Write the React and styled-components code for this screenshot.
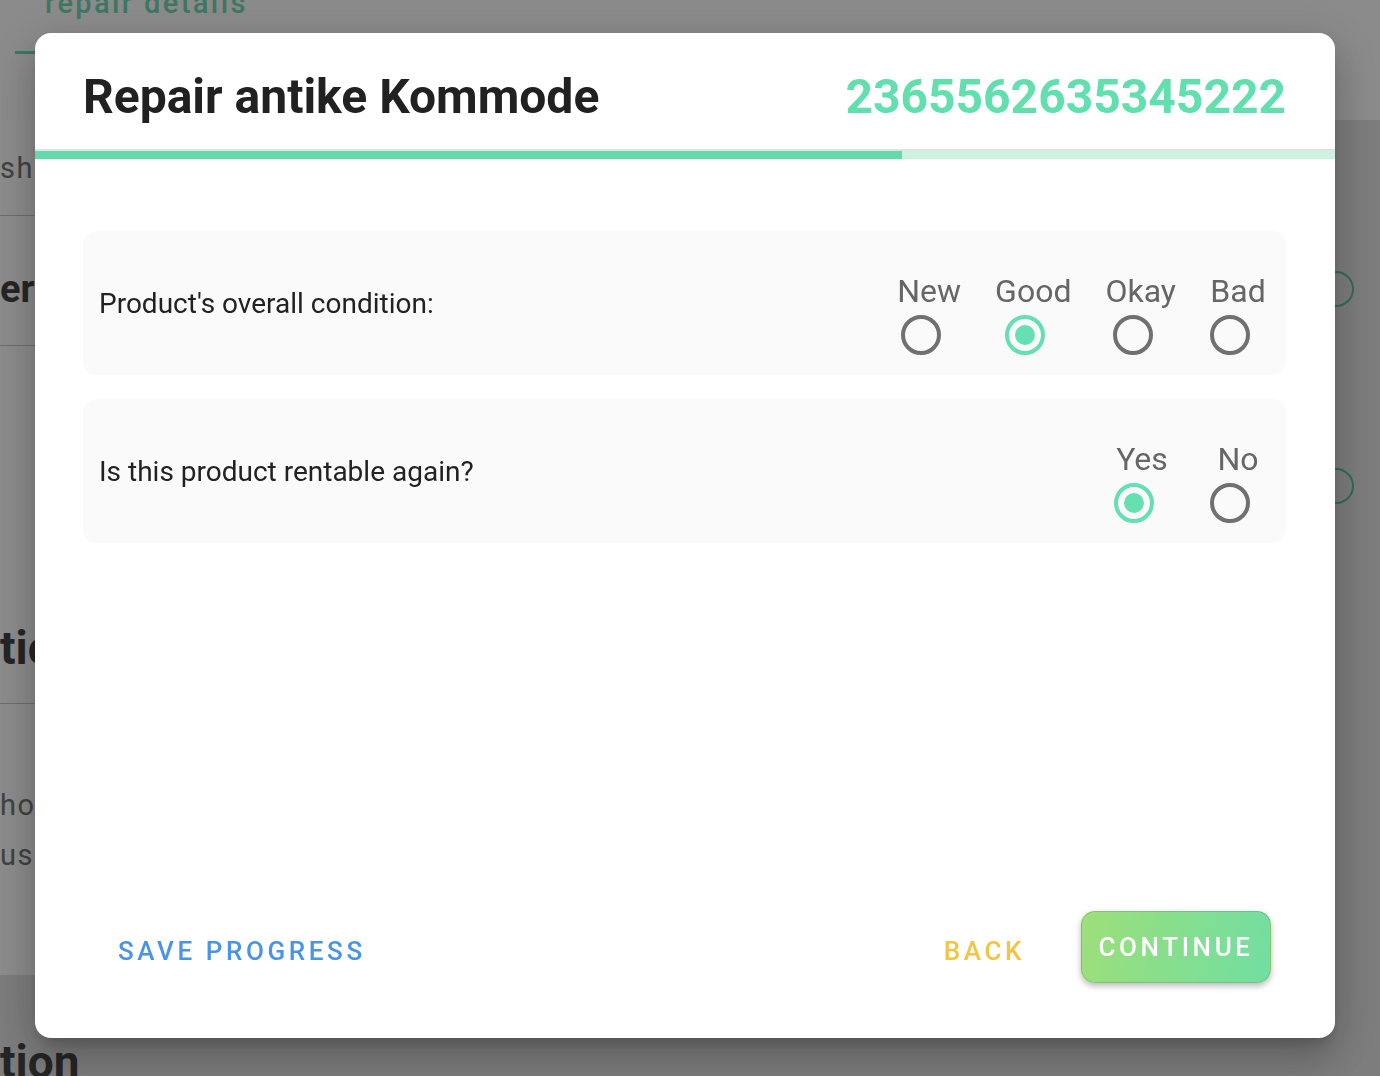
import React, { useState } from 'react'
import styled, { createGlobalStyle } from 'styled-components'

const GlobalStyle = createGlobalStyle`
  html, body { margin: 0; padding: 0; }
  body {
    font-family: Roboto, "Liberation Sans", Arial, sans-serif;
    background: #e4e4e4;
    overflow: hidden;
  }
`

/* ---------- page behind the dialog ---------- */
const Page = styled.div`
  width: 1380px;
  height: 1076px;
  display: flex;
  flex-direction: column;
  overflow: hidden;
`
const TopBar = styled.div`
  height: 120px;
  flex-shrink: 0;
  background: #fdfdfd;
  display: flex;
  flex-direction: column;
  padding-left: 15px;
  box-sizing: border-box;
`
const Tab = styled.div`
  color: #70dab2;
  font-size: 29px;
  font-weight: 500;
  letter-spacing: 2.4px;
  padding-left: 30px;
  margin-top: -14px;
  height: 68px;
  border-bottom: 3px solid #70dab2;
  width: 260px;
  box-sizing: border-box;
`
const Content = styled.div`
  height: 855px;
  flex-shrink: 0;
  width: 1330px;
  background: #ffffff;
  display: flex;
  flex-direction: column;
`
const Section = styled.div`
  height: ${({ h }) => h}px;
  flex-shrink: 0;
  border-bottom: ${({ line }) => (line ? '1px solid #c9c9c9' : 'none')};
  display: flex;
  flex-direction: column;
  justify-content: ${({ top }) => (top ? 'flex-start' : 'center')};
  padding-top: ${({ top }) => top || 0}px;
  box-sizing: border-box;
`
const Row = styled.div`
  display: flex;
  align-items: center;
  justify-content: space-between;
  height: ${({ h }) => h || 40}px;
`
const PageText = styled.div`
  color: ${({ bold }) => (bold ? '#444' : '#777')};
  font-size: ${({ size }) => size}px;
  font-weight: ${({ bold }) => (bold ? 700 : 400)};
  letter-spacing: ${({ bold }) => (bold ? 0 : 1.5)}px;
  line-height: ${({ lh }) => lh || 50}px;
  margin-top: ${({ mt }) => mt || 0}px;
`
const Pill = styled.div`
  width: 110px;
  height: 36px;
  border: 2px solid #5cc79c;
  border-radius: 18px;
  margin-right: -24px;
  box-sizing: border-box;
`
const Bottom = styled.div`
  flex: 1;
  padding-top: 62px;
`

/* ---------- dialog ---------- */
const Overlay = styled.div`
  position: fixed;
  inset: 0;
  background: rgba(0, 0, 0, 0.45);
  display: flex;
  align-items: flex-start;
  justify-content: flex-start;
`
const Dialog = styled.div`
  margin: 33px 0 0 35px;
  width: 1300px;
  height: 1005px;
  background: #fff;
  border-radius: 16px;
  overflow: hidden;
  display: flex;
  flex-direction: column;
  box-shadow: 0 11px 15px -7px rgba(0,0,0,.2), 0 24px 38px 3px rgba(0,0,0,.14), 0 9px 46px 8px rgba(0,0,0,.12);
`
const Header = styled.div`
  height: 118px;
  flex-shrink: 0;
  display: flex;
  align-items: center;
  justify-content: space-between;
  padding: 10px 49px 0 48px;
  box-sizing: border-box;
  border-bottom: 2px solid #e2e2e2;
`
const Title = styled.h1`
  margin: 0;
  font-size: 48px;
  font-weight: 700;
  color: #212121;
`
const OrderNo = styled.div`
  font-size: 48px;
  font-weight: 700;
  color: #62dfae;
`
const Progress = styled.div`
  height: 8px;
  flex-shrink: 0;
  background: #cdf2e2;
`
const ProgressFill = styled.div`
  height: 100%;
  background: #64dbae;
`
const Body = styled.div`
  flex: 1;
  display: flex;
  flex-direction: column;
  gap: 24px;
  padding: 72px 49px 0 48px;
`
const QuestionCard = styled.div`
  height: 144px;
  background: #fafafa;
  border-radius: 14px;
  display: flex;
  align-items: center;
  justify-content: space-between;
  padding: 0 20px 0 16px;
  box-sizing: border-box;
`
const Question = styled.div`
  font-size: 28px;
  color: #222;
`
const Options = styled.div`
  display: flex;
  gap: ${({ gap }) => gap}px;
  margin-top: 22px;
`
const Option = styled.label`
  display: flex;
  flex-direction: column;
  align-items: center;
  gap: 6px;
  min-width: 56px;
  cursor: pointer;
`
const OptionLabel = styled.span`
  font-size: 32px;
  line-height: 36px;
  color: #666;
`
const Radio = styled.span`
  width: 40px;
  height: 40px;
  margin-right: 16px;
  border-radius: 50%;
  border: 4px solid ${({ checked }) => (checked ? '#66dfb3' : '#707070')};
  box-sizing: border-box;
  display: flex;
  align-items: center;
  justify-content: center;
  &::after {
    content: '';
    width: 20px;
    height: 20px;
    border-radius: 50%;
    background: #66dfb3;
    display: ${({ checked }) => (checked ? 'block' : 'none')};
  }
`
const Footer = styled.div`
  display: flex;
  align-items: center;
  justify-content: space-between;
  padding: 0 64px 55px 83px;
`
const TextButton = styled.button`
  background: none;
  border: none;
  padding: 0;
  margin-top: 8px;
  font-family: inherit;
  font-size: 26px;
  font-weight: 500;
  letter-spacing: 3.6px;
  color: ${({ color }) => color};
  cursor: pointer;
`
const Actions = styled.div`
  display: flex;
  align-items: center;
  gap: 56px;
`
const PrimaryButton = styled.button`
  width: 190px;
  height: 72px;
  border: 1px solid rgba(0, 0, 0, 0.12);
  border-radius: 14px;
  background: linear-gradient(100deg, #9ddf7a 0%, #86de8e 50%, #72dea2 100%);
  box-shadow: 0 3px 6px rgba(0, 0, 0, 0.28);
  color: #fff;
  font-family: inherit;
  font-size: 26px;
  font-weight: 500;
  letter-spacing: 3.6px;
  cursor: pointer;
`

const Choice = ({ options, value, onChange, gap }) => (
  <Options gap={gap}>
    {options.map((o) => (
      <Option key={o} onClick={() => onChange(o)}>
        <OptionLabel>{o}</OptionLabel>
        <Radio checked={value === o} />
      </Option>
    ))}
  </Options>
)

const App = () => {
  const [condition, setCondition] = useState('Good')
  const [rentable, setRentable] = useState('Yes')
  const progress = 66.7

  return (
    <>
      <GlobalStyle />
      <Page>
        <TopBar>
          <Tab>repair details</Tab>
        </TopBar>
        <Content>
          <Section h={96} line>
            <PageText size={29}>shipping</PageText>
          </Section>
          <Section h={130} line top={48}>
            <Row h={50}>
              <PageText size={38} bold>erhalten</PageText>
              <Pill />
            </Row>
          </Section>
          <Section h={358} line top={122}>
            <Row h={36}>
              <PageText size={29}> </PageText>
              <Pill />
            </Row>
            <PageText size={46} bold lh={60} mt={114}>tickets</PageText>
          </Section>
          <Section h={271} top={76}>
            <PageText size={29}>hood</PageText>
            <PageText size={29}>us:</PageText>
          </Section>
        </Content>
        <Bottom>
          <PageText size={46} bold>tion</PageText>
        </Bottom>
      </Page>

      <Overlay>
        <Dialog>
          <Header>
            <Title>Repair antike Kommode</Title>
            <OrderNo>2365562635345222</OrderNo>
          </Header>
          <Progress>
            <ProgressFill style={{ width: `${progress}%` }} />
          </Progress>
          <Body>
            <QuestionCard>
              <Question>Product's overall condition:</Question>
              <Choice
                options={['New', 'Good', 'Okay', 'Bad']}
                value={condition}
                onChange={setCondition}
                gap={34}
              />
            </QuestionCard>
            <QuestionCard>
              <Question>Is this product rentable again?</Question>
              <Choice
                options={['Yes', 'No']}
                value={rentable}
                onChange={setRentable}
                gap={40}
              />
            </QuestionCard>
          </Body>
          <Footer>
            <TextButton color="#4a94e8">SAVE PROGRESS</TextButton>
            <Actions>
              <TextButton color="#f4c443">BACK</TextButton>
              <PrimaryButton>CONTINUE</PrimaryButton>
            </Actions>
          </Footer>
        </Dialog>
      </Overlay>
    </>
  )
}

export default App
